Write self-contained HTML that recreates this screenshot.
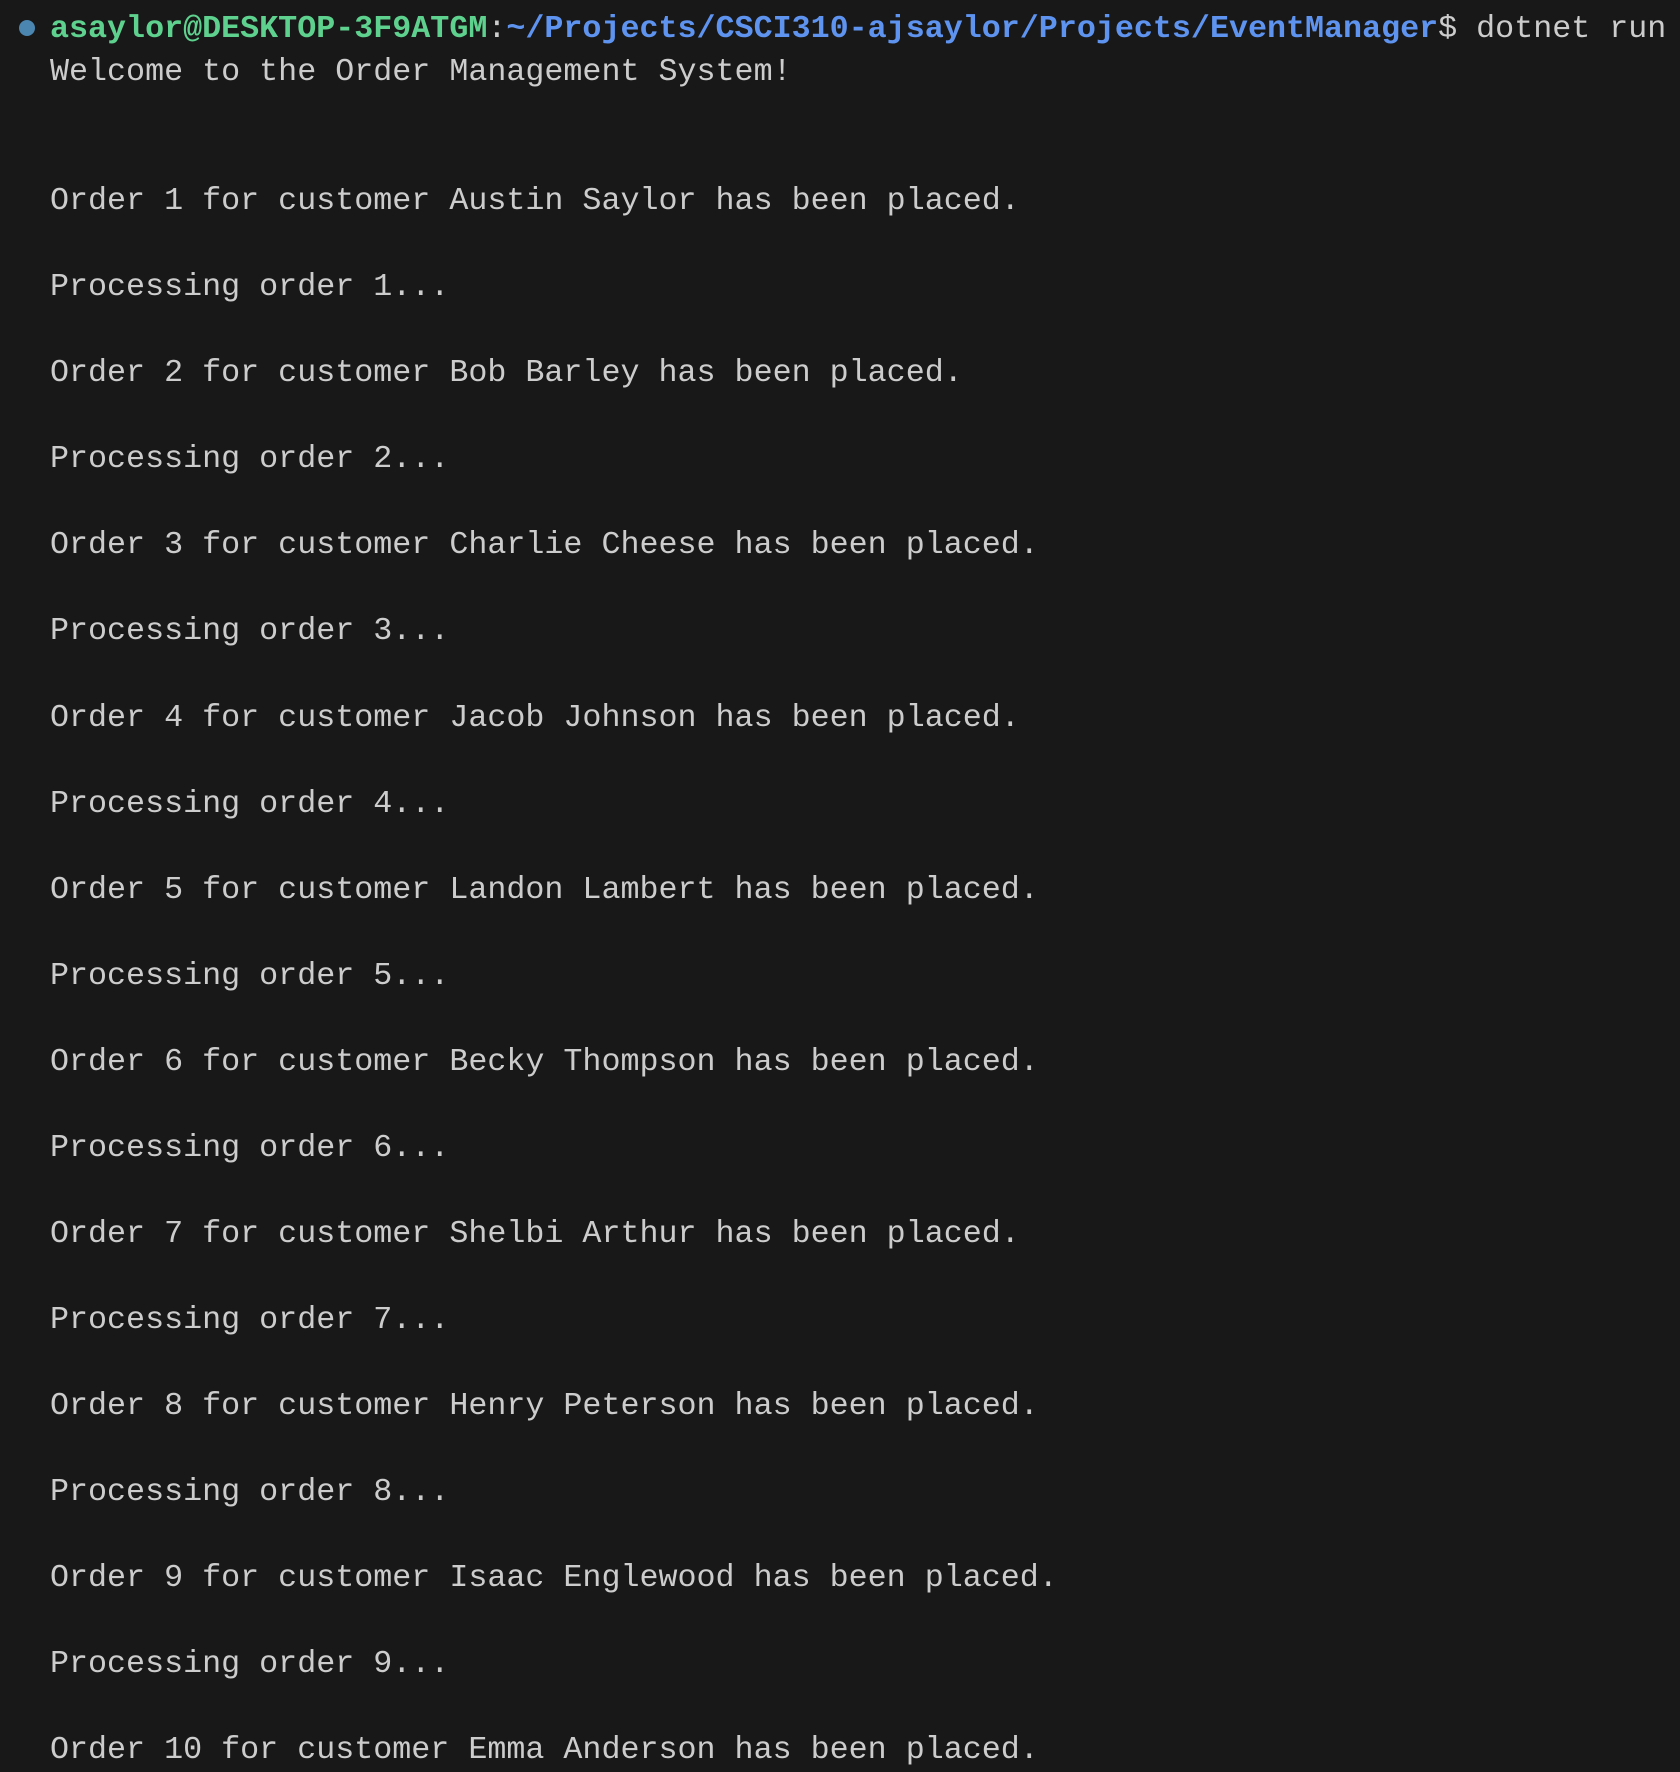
<!DOCTYPE html>
<html><head><style>
html,body{margin:0;padding:0;background:#181818;width:1680px;height:1770px;overflow:hidden}
pre{position:absolute;left:50px;top:8px;margin:0;font-family:"Liberation Mono",monospace;font-size:31.7px;line-height:43.03px;color:#cccccc;white-space:pre}
.g{color:#5fd18e;font-weight:bold}.b{color:#5e94f0;font-weight:bold}
.dot{position:absolute;left:19px;top:20px;width:16px;height:16px;border-radius:50%;background:#4b86b0}
</style></head><body>
<div class="dot"></div>
<pre><span class="g">asaylor@DESKTOP-3F9ATGM</span>:<span class="b">~/Projects/CSCI310-ajsaylor/Projects/EventManager</span>$ dotnet run
Welcome to the Order Management System!


Order 1 for customer Austin Saylor has been placed.

Processing order 1...

Order 2 for customer Bob Barley has been placed.

Processing order 2...

Order 3 for customer Charlie Cheese has been placed.

Processing order 3...

Order 4 for customer Jacob Johnson has been placed.

Processing order 4...

Order 5 for customer Landon Lambert has been placed.

Processing order 5...

Order 6 for customer Becky Thompson has been placed.

Processing order 6...

Order 7 for customer Shelbi Arthur has been placed.

Processing order 7...

Order 8 for customer Henry Peterson has been placed.

Processing order 8...

Order 9 for customer Isaac Englewood has been placed.

Processing order 9...

Order 10 for customer Emma Anderson has been placed.</pre>
</body></html>
